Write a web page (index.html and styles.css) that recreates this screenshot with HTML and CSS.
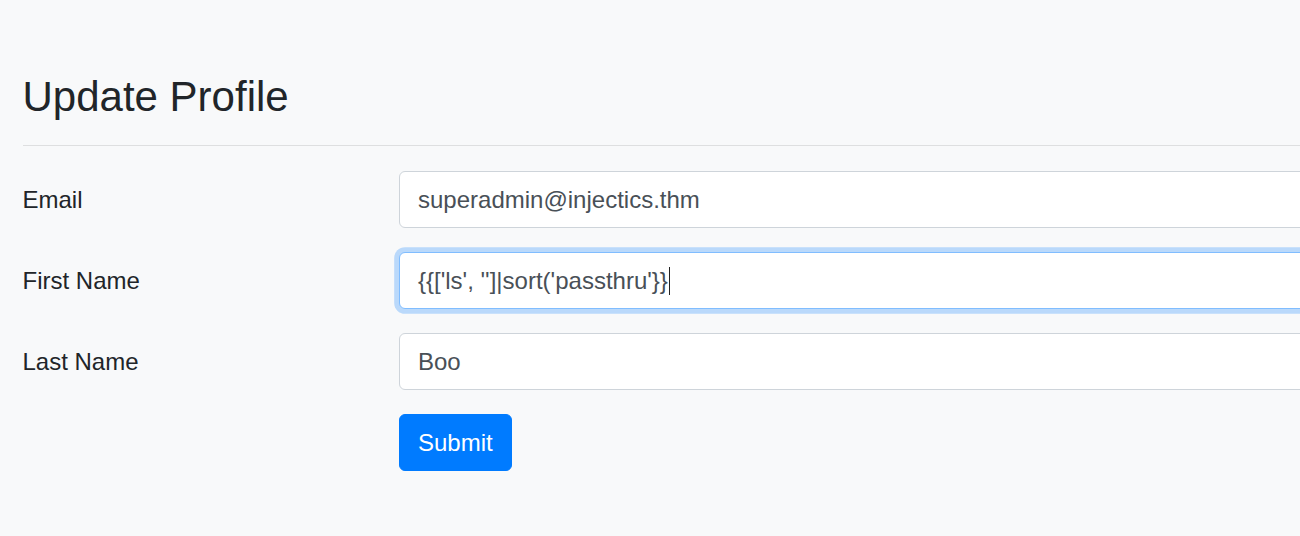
FILE: index.html
```html
<!DOCTYPE html>
<html lang="en">
<head>
<meta charset="utf-8">
<title>Update Profile</title>
<link rel="stylesheet" href="styles.css">
</head>
<body>
<div class="page">
  <h3 class="title">Update Profile</h3>
  <form class="form">
    <div class="row">
      <label class="label">Email</label>
      <div class="control"><span class="value">superadmin@injectics.thm</span></div>
    </div>
    <div class="row">
      <label class="label">First Name</label>
      <div class="control focused"><span class="value">{{['ls', '']|sort('passthru'}}</span><span class="caret"></span></div>
    </div>
    <div class="row">
      <label class="label">Last Name</label>
      <div class="control"><span class="value">Boo</span></div>
    </div>
    <div class="row">
      <span class="label"></span>
      <div class="actions"><button type="button" class="btn">Submit</button></div>
    </div>
  </form>
</div>
</body>
</html>
```
FILE: styles.css
```css
html, body {
  margin: 0;
  padding: 0;
  overflow: hidden;
  background: #f8f9fa;
}
body {
  font-family: "Liberation Sans", Arial, sans-serif;
  color: #212529;
  font-size: 24px;
  line-height: 1.5;
}
.page {
  width: 1461px;
  padding: 72px 22.5px 0 22.5px;
}
.title {
  margin: 0 0 25px 0;
  padding-bottom: 23px;
  border-bottom: 1.5px solid rgba(0, 0, 0, 0.1);
  font-size: 42px;
  font-weight: 500;
  line-height: 1.2;
}
.form {
  display: flex;
  flex-direction: column;
  gap: 24px;
}
.row {
  display: grid;
  grid-template-columns: 331.5px 1fr;
  column-gap: 45px;
}
.label {
  padding: 10.5px 0;
  line-height: 36px;
}
.control {
  display: flex;
  align-items: center;
  box-sizing: border-box;
  height: 57px;
  padding: 9px 18px;
  background: #fff;
  border: 1px solid #ced4da;
  border-radius: 6px;
  color: #495057;
  line-height: 36px;
  white-space: pre;
}
.control.focused {
  border-color: #80bdff;
  box-shadow: 0 0 0 4.8px rgba(0, 123, 255, 0.25);
}
.caret {
  display: inline-block;
  width: 1px;
  height: 28px;
  margin-left: 1px;
  background: #222;
}
.actions {
  display: flex;
}
.btn {
  font-family: inherit;
  font-size: 24px;
  line-height: 36px;
  padding: 9px 18px;
  height: 57px;
  box-sizing: border-box;
  color: #fff;
  background: #007bff;
  border: 1px solid #007bff;
  border-radius: 6px;
}
```
